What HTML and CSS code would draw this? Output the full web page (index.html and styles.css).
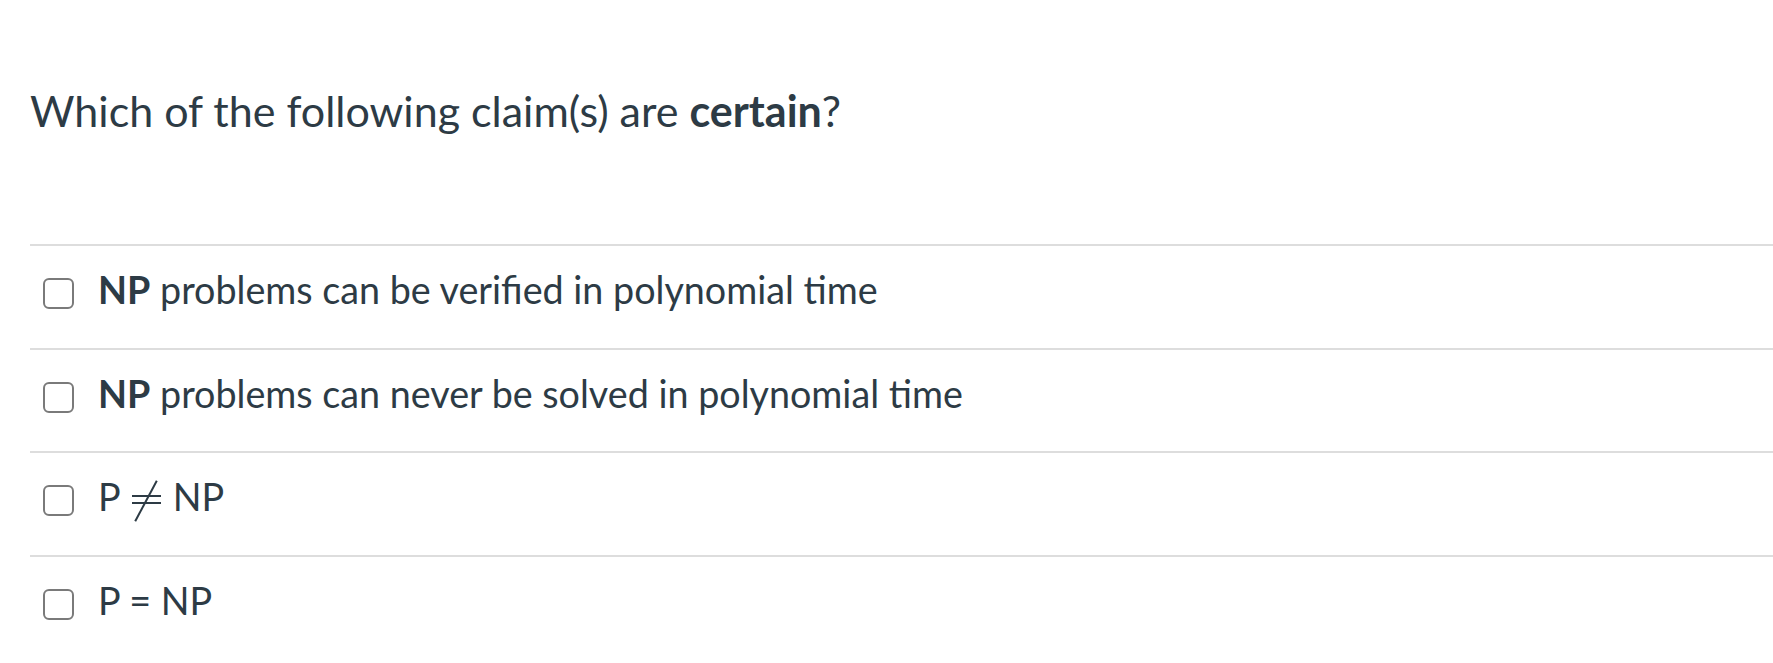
FILE: index.html
```html
<!DOCTYPE html>
<html>
<head>
<meta charset="utf-8">
<link rel="stylesheet" href="styles.css">
</head>
<body>
<div class="question">
  <p class="question-text">Which of the following claim(s) are <strong>certain</strong>?</p>
  <div class="answers">
    <label class="answer">
      <span class="box"></span>
      <span class="answer-text"><strong>NP</strong> problems can be verified in polynomial time</span>
    </label>
    <label class="answer">
      <span class="box"></span>
      <span class="answer-text"><strong>NP</strong> problems can never be solved in polynomial time</span>
    </label>
    <label class="answer">
      <span class="box"></span>
      <span class="answer-text">P<span class="neq" aria-label="≠"></span>NP</span>
    </label>
    <label class="answer">
      <span class="box"></span>
      <span class="answer-text">P = NP</span>
    </label>
  </div>
</div>
</body>
</html>
```

FILE: styles.css
```css
html, body {
  margin: 0;
  padding: 0;
  background: #ffffff;
}
body {
  font-family: Lato, "Noto Sans", sans-serif;
  color: #2d3b45;
  overflow: hidden;
}
.question {
  padding: 79px 0 0 30px;
}
.question-text {
  margin: 0;
  font-size: 43px;
  line-height: 64.5px;
}
.question-text strong {
  font-weight: 700;
}
.answers {
  margin-top: 100.5px;
}
.answer {
  display: flex;
  align-items: flex-start;
  border-top: 2px solid #dddddd;
  padding: 16px 0 30px 13px;
  height: 55.5px;
}
.box {
  flex: none;
  box-sizing: border-box;
  width: 31px;
  height: 31px;
  margin-top: 16px;
  border: 2.5px solid #7a7a7a;
  border-radius: 6px;
  background: #fff;
}
.answer-text {
  margin-left: 24px;
  font-size: 37.7px;
  line-height: 55.5px;
  white-space: nowrap;
}
.answer-text strong {
  font-weight: 700;
}
.neq {
  position: relative;
  display: inline-block;
  width: 29px;
  height: 41px;
  margin: 0 12px 0 11px;
  vertical-align: -10px;
}
.neq::before {
  content: "";
  position: absolute;
  left: 0;
  right: 0;
  top: 15px;
  height: 5px;
  border-top: 2px solid #2d3b45;
  border-bottom: 2px solid #2d3b45;
}
.neq::after {
  content: "";
  position: absolute;
  left: 50%;
  top: 50%;
  width: 2px;
  height: 46px;
  margin-left: -1px;
  margin-top: -23px;
  background: #2d3b45;
  transform: rotate(28deg);
}
```
